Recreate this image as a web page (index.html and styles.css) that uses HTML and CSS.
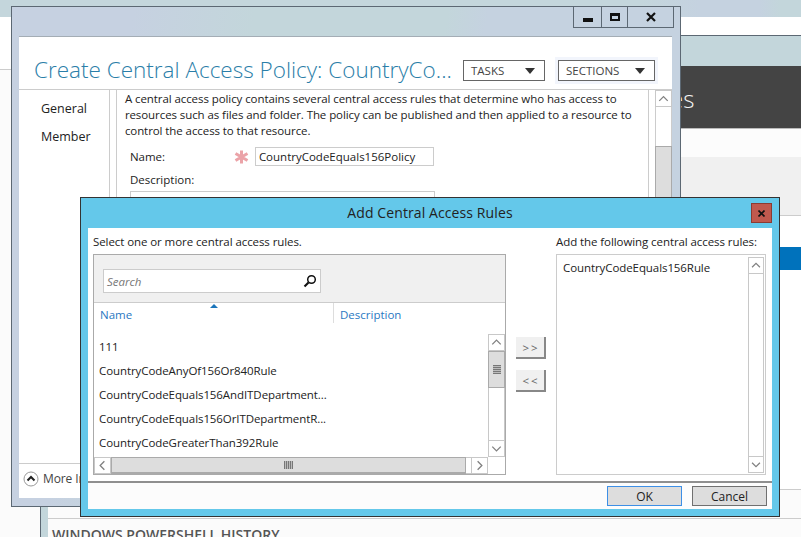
FILE: index.html
```html
<!DOCTYPE html>
<html>
<head>
<title>Create Central Access Policy</title>
<link rel="stylesheet" href="styles.css">
</head>
<body>
<svg class="defs" width="0" height="0">
  <symbol id="chev-up" viewBox="0 0 16 16"><path d="M3.5 10 8 5.5 12.500 10" fill="none" stroke="#808080" stroke-width="1.400"/></symbol>
  <symbol id="chev-down" viewBox="0 0 16 16"><path d="M3.500 6 8 10.500 12.500 6" fill="none" stroke="#808080" stroke-width="1.400"/></symbol>
  <symbol id="chev-left" viewBox="0 0 16 16"><path d="M10 3.500 5.500 8 10 12.500" fill="none" stroke="#808080" stroke-width="1.400"/></symbol>
  <symbol id="chev-right" viewBox="0 0 16 16"><path d="M6 3.500 10.500 8 6 12.500" fill="none" stroke="#808080" stroke-width="1.400"/></symbol>
</svg>

<div class="desktop">
  <div class="top-strip"></div>
  <div class="page-white"></div>

  <!-- window behind the policy dialog -->
  <div class="console">
    <div class="console-frame"></div>
    <div class="console-body">
      <div class="console-head">es</div>
      <div class="row-light"></div>
      <div class="row-grey"></div>
      <div class="row-gap"></div>
      <div class="row-blue"></div>
      <div class="row-tall"></div>
      <div class="row-low"></div>
      <div class="history">WINDOWS POWERSHELL HISTORY</div>
    </div>
  </div>

  <!-- Create Central Access Policy -->
  <div class="win">
    <div class="win-bar">
      <div class="win-btns">
        <div class="win-btn btn-min"><span class="min-icon"></span></div>
        <div class="win-btn btn-max"><span class="max-icon"></span></div>
        <div class="win-btn btn-close">
          <svg width="10" height="10" viewBox="0 0 10 10"><path d="M1 1 9 9M9 1 1 9" stroke="#111" stroke-width="2.200"/></svg>
        </div>
      </div>
    </div>
    <div class="win-inner">
      <div class="win-head">
        <h1 class="win-title">Create Central Access Policy: CountryCo...</h1>
        <div class="drop drop-tasks">TASKS<span class="drop-arrow"></span></div>
        <div class="drop drop-sections">SECTIONS<span class="drop-arrow"></span></div>
      </div>
      <div class="win-main">
        <div class="nav">
          <div class="nav-item">General</div>
          <div class="nav-item">Member</div>
        </div>
        <div class="nav-gap"></div>
        <div class="content">
          <p class="intro">A central access policy contains several central access rules that determine who has access to<br>resources such as files and folder. The policy can be published and then applied to a resource to<br>control the access to that resource.</p>
          <div class="name-row">
            <label class="name-label">Name:</label>
            <svg class="star" width="15" height="14" viewBox="0 0 15 14"><path d="M7.500 0.500V13.500M1.500 3.500 13.500 10.500M13.500 3.500 1.500 10.500" stroke="#eba3a8" stroke-width="3"/></svg>
            <div class="name-input">CountryCodeEquals156Policy</div>
          </div>
          <div class="desc-label">Description:</div>
          <div class="desc-box"></div>
        </div>
        <div class="win-scroll">
          <div class="sb-btn sb-btn-plain"><svg width="16" height="16"><use href="#chev-up"/></svg></div>
          <div class="win-scroll-track"></div>
          <div class="win-scroll-thumb"></div>
        </div>
      </div>
      <div class="win-foot">
        <svg width="16" height="16" viewBox="0 0 16 16"><circle cx="8" cy="8" r="7" fill="#fff" stroke="#9a9a9a"/><path d="M4.500 9.500 8 6l3.500 3.500" fill="none" stroke="#222" stroke-width="2"/></svg>
        <span class="more">More Information</span>
      </div>
    </div>
  </div>

  <!-- Add Central Access Rules -->
  <div class="dialog">
    <div class="dlg-bar">
      <span></span>
      <div class="dlg-title">Add Central Access Rules</div>
      <div class="dlg-close">
        <svg width="7" height="7" viewBox="0 0 7 7"><path d="M.5.500l6 6M6.500.500l-6 6" stroke="#111" stroke-width="1.600"/></svg>
      </div>
    </div>
    <div class="dlg-body">
      <div class="dlg-main">
        <div class="col-left">
          <div class="col-label">Select one or more central access rules.</div>
          <div class="panel">
            <div class="panel-top">
              <div class="search">
                <span class="search-text">Search</span>
                <svg width="14" height="14" viewBox="0 0 14 14"><circle cx="8.500" cy="5.500" r="3.800" fill="none" stroke="#111" stroke-width="1.500"/><path d="M5.500 8.500 1.500 12.500" stroke="#111" stroke-width="2.200"/></svg>
              </div>
            </div>
            <div class="cols">
              <div class="col-name">Name<span class="sort-arrow"></span></div>
              <div class="col-desc">Description</div>
            </div>
            <div class="list-wrap">
              <div class="list">
                <div class="list-row">111</div>
                <div class="list-row">CountryCodeAnyOf156Or840Rule</div>
                <div class="list-row">CountryCodeEquals156AndITDepartment...</div>
                <div class="list-row">CountryCodeEquals156OrITDepartmentR...</div>
                <div class="list-row">CountryCodeGreaterThan392Rule</div>
              </div>
              <div class="vscroll">
                <div class="sb-btn"><svg width="15" height="15"><use href="#chev-up"/></svg></div>
                <div class="vthumb"><span class="grip-h"></span></div>
                <div class="sb-track"></div>
                <div class="sb-btn"><svg width="15" height="15"><use href="#chev-down"/></svg></div>
              </div>
            </div>
            <div class="hscroll">
              <div class="sb-btn sb-btn-h"><svg width="15" height="15"><use href="#chev-left"/></svg></div>
              <div class="hthumb"><span class="grip-v"></span></div>
              <div class="hgap"></div>
              <div class="sb-btn sb-btn-h"><svg width="15" height="15"><use href="#chev-right"/></svg></div>
              <div class="hcorner"></div>
            </div>
          </div>
        </div>
        <div class="col-mid">
          <div class="move-btn">&gt; &gt;</div>
          <div class="move-btn">&lt; &lt;</div>
        </div>
        <div class="col-right">
          <div class="col-label">Add the following central access rules:</div>
          <div class="picked">
            <div class="picked-item">CountryCodeEquals156Rule</div>
            <div class="vscroll vscroll-picked">
              <div class="sb-btn"><svg width="14" height="15"><use href="#chev-up"/></svg></div>
              <div class="sb-track"></div>
              <div class="sb-btn"><svg width="14" height="15"><use href="#chev-down"/></svg></div>
            </div>
          </div>
        </div>
      </div>
      <div class="dlg-foot">
        <div class="foot-btn foot-ok">OK</div>
        <div class="foot-btn">Cancel</div>
      </div>
    </div>
  </div>
</div>
</body>
</html>
```

FILE: styles.css
```css
* {
  box-sizing: border-box;
}

body {
  margin: 0;
  font-family: "Open Sans", "Noto Sans", sans-serif;
  font-size: 11.5px;
  color: #222;
}

.defs {
  display: block;
  height: 0;
}

.desktop {
  position: relative;
  width: 801px;
  height: 537px;
  overflow: hidden;
  background: #fbfbfb;
}

.top-strip {
  height: 17px;
  background: linear-gradient(90deg, #c4d6dc 0, #c4d6dc 640px, #c5d2e0 700px, #c5d2e0 760px, #c3d6db 780px);
}

.page-white {
  height: 53px;
  background: #fff;
  border-bottom: 1px solid #ccc;
}

/* back window */
.console {
  position: absolute;
  left: 40px;
  top: 35px;
  width: 780px;
  height: 520px;
  border: 1px solid #5c6873;
  background: #c3d6db;
  padding-left: 7px;
}

.console-frame {
  height: 30px;
}

.console-body {
  height: 480px;
  background: #fff;
}

.console-head {
  height: 63px;
  background: #444;
  border-bottom: 1px solid #bbb;
  color: #f4f4f4;
  font-size: 24px;
  font-weight: 300;
  line-height: 66px;
  padding-left: 622px;
}

.row-light {
  height: 28px;
  background: #fcfcfc;
}

.row-grey {
  height: 59px;
  background: #f0f0f0;
  border-bottom: 1px solid #ccc;
}

.row-gap {
  height: 31px;
}

.row-blue {
  height: 23px;
  background: #0072bc;
}

.row-tall {
  height: 220px;
  background: #fff;
  border-bottom: 1px solid #ccc;
}

.row-low {
  height: 29px;
  background: #fbfbfb;
  border-bottom: 1px solid #ccc;
}

.history {
  padding: 6px 0 0 4px;
  font-size: 14px;
  font-weight: 600;
  color: #555;
  background: #fbfbfb;
  white-space: nowrap;
}

/* policy window */
.win {
  position: absolute;
  left: 11px;
  top: 6px;
  width: 670px;
  height: 501px;
  border: 1px solid #5c6873;
  padding: 0 8px 8px 7px;
  background: linear-gradient(100deg, #c6d1e1 0, #c6d1e1 120px, #c3d6db 240px, #c3d6db 430px, #c5d2e0 470px, #c5d2e0 100%);
}

.win-bar {
  height: 29px;
  margin-top: -1px;
  margin-bottom: 1px;
  display: flex;
  justify-content: flex-end;
}

.win-btns {
  display: flex;
  height: 22px;
  border: 1px solid #5c6873;
  margin-right: -2px;
}

.win-btn {
  display: flex;
  align-items: center;
  justify-content: center;
  height: 100%;
  border-left: 1px solid #5c6873;
}

.btn-min {
  width: 27px;
  border-left: 0;
}

.btn-max {
  width: 26px;
}

.btn-close {
  width: 46px;
}

.min-icon {
  display: block;
  width: 10px;
  height: 4px;
  margin-top: 6px;
  background: #111;
}

.max-icon {
  display: block;
  width: 10px;
  height: 8px;
  border: 2px solid #111;
  border-top-width: 3px;
}

.win-inner {
  height: 462px;
  background: #fff;
  border-top: 1px solid #a4adb5;
  display: flex;
  flex-direction: column;
}

.win-head {
  height: 53px;
  flex: none;
  display: flex;
  align-items: flex-start;
  border-bottom: 1px solid #ccc;
  padding-left: 15px;
}

.win-title {
  margin: 17px 0 0;
  width: 429px;
  font-size: 22.500px;
  font-weight: 300;
  line-height: 32px;
  color: #2a7ea8;
  white-space: nowrap;
}

.drop {
  display: flex;
  align-items: center;
  justify-content: space-between;
  height: 21px;
  margin-top: 23px;
  padding: 0 9px 0 7px;
  border: 1px solid #666;
  font-size: 11.5px;
  color: #444;
}

.drop-tasks {
  width: 82px;
  margin-right: 13px;
}

.drop-sections {
  width: 97px;
  box-shadow: 0 0 0 3px #f2f5fc;
}

.drop-arrow {
  width: 0;
  height: 0;
  border-left: 5px solid transparent;
  border-right: 5px solid transparent;
  border-top: 6px solid #333;
}

.win-main {
  flex: 1;
  min-height: 0;
  display: flex;
  overflow: hidden;
}

.nav {
  width: 91px;
  padding: 5px 0 0 22px;
  border-right: 1px solid #ccc;
}

.nav-item {
  height: 28px;
  line-height: 28px;
  font-size: 12.5px;
}

.nav-gap {
  width: 7px;
  border-right: 1px solid #ccc;
}

.content {
  width: 533px;
  padding: 1px 0 0 8px;
  border-right: 1px solid #ccc;
}

.intro {
  margin: 0 0 8px;
  line-height: 16px;
  letter-spacing: -0.08px;
  white-space: nowrap;
}

.name-row {
  display: flex;
  align-items: center;
  padding-left: 5px;
  height: 19px;
}

.name-label {
  width: 104px;
}

.star {
  margin-right: 6px;
}

.name-input {
  width: 179px;
  height: 19px;
  line-height: 17px;
  padding-left: 3px;
  border: 1px solid #ccc;
}

.desc-label {
  margin: 6px 0 3px 5px;
  line-height: 16px;
}

.desc-box {
  width: 305px;
  height: 100px;
  margin-left: 5px;
  border: 1px solid #ccc;
}

.win-scroll {
  width: 17px;
  margin-left: 6px;
  display: flex;
  flex-direction: column;
}

.win-scroll-track {
  height: 39px;
  border-left: 1px solid #ccc;
  border-right: 1px solid #ccc;
}

.win-scroll-thumb {
  height: 200px;
  background: #ddd;
  border: 1px solid #aaa;
}

.sb-btn {
  flex: none;
  height: 17px;
  display: flex;
  align-items: center;
  justify-content: center;
  background: #fff;
  border: 1px solid #c8c8c8;
}

.sb-btn-plain {
  height: 17px;
}

.win-foot {
  height: 35px;
  flex: none;
  display: flex;
  align-items: center;
  gap: 4px;
  padding: 0 0 5px 4px;
  border-top: 1px solid #ccc;
  font-size: 12px;
  letter-spacing: -0.1px;
  color: #444;
}

.more {
  white-space: nowrap;
}

/* rules dialog */
.dialog {
  position: absolute;
  left: 80px;
  top: 197px;
  width: 700px;
  height: 320px;
  border: 1px solid #333;
  background: #64c8ea;
  padding: 0 7px 7px;
  display: flex;
  flex-direction: column;
}

.dlg-bar {
  height: 30px;
  flex: none;
  display: grid;
  grid-template-columns: 1fr auto 1fr;
  align-items: start;
}

.dlg-title {
  font-size: 14px;
  line-height: 30px;
  letter-spacing: 0.1px;
  color: #222;
}

.dlg-close {
  justify-self: end;
  display: flex;
  align-items: center;
  justify-content: center;
  width: 21px;
  height: 20px;
  margin-top: 5px;
  background: #c0594e;
  border: 1px solid #8b3b33;
}

.dlg-body {
  flex: 1;
  min-height: 0;
  background: #fff;
  display: flex;
  flex-direction: column;
}

.dlg-main {
  height: 255px;
  flex: none;
  display: flex;
  gap: 10px;
  padding-left: 5px;
  border-bottom: 2px solid #8f8f8f;
}

.col-left {
  width: 413px;
}

.col-label {
  height: 26px;
  padding-top: 6px;
  line-height: 16px;
  letter-spacing: -0.08px;
  white-space: nowrap;
}

.panel {
  height: 221px;
  border: 1px solid #aaa;
  display: flex;
  flex-direction: column;
}

.panel-top {
  height: 48px;
  flex: none;
  padding: 14px 0 0 9px;
  background: #f0f0f0;
  border-bottom: 1px solid #ccc;
}

.search {
  width: 218px;
  height: 24px;
  display: flex;
  align-items: center;
  justify-content: space-between;
  padding: 0 3px 0 3px;
  background: #fff;
  border: 1px solid #ccc;
}

.search-text {
  font-style: italic;
  color: #777;
}

.cols {
  height: 20px;
  flex: none;
  display: flex;
  color: #2a78c2;
  line-height: 24px;
}

.col-name {
  position: relative;
  width: 240px;
  padding-left: 6px;
  border-right: 1px solid #ddd;
}

.sort-arrow {
  position: absolute;
  left: 116px;
  top: 1px;
  width: 0;
  height: 0;
  border-left: 4px solid transparent;
  border-right: 4px solid transparent;
  border-bottom: 4px solid #1b75bb;
}

.col-desc {
  padding-left: 6px;
}

.list-wrap {
  flex: 1;
  min-height: 0;
  display: flex;
  padding-top: 11px;
}

.list {
  flex: 1;
  padding: 1px 0 0 5px;
  letter-spacing: -0.08px;
}

.list-row {
  height: 24px;
  line-height: 24px;
  white-space: nowrap;
}

.vscroll {
  width: 17px;
  flex: none;
  display: flex;
  flex-direction: column;
}

.vthumb {
  height: 37px;
  flex: none;
  display: flex;
  align-items: center;
  justify-content: center;
  background: #ddd;
  border: 1px solid #aaa;
}

.grip-h {
  width: 8px;
  height: 9px;
  background: repeating-linear-gradient(180deg, #777 0, #777 1px, #bbb 1px, #bbb 2px);
}

.sb-track {
  flex: 1;
  border-left: 1px solid #c8c8c8;
  border-right: 1px solid #c8c8c8;
}

.hscroll {
  height: 17px;
  flex: none;
  display: flex;
}

.sb-btn-h {
  width: 17px;
}

.hthumb {
  width: 355px;
  display: flex;
  align-items: center;
  justify-content: center;
  background: #ddd;
  border: 1px solid #aaa;
  border-width: 1px 1px 2px;
}

.grip-v {
  width: 9px;
  height: 8px;
  background: repeating-linear-gradient(90deg, #777 0, #777 1px, #bbb 1px, #bbb 2px);
}

.hgap {
  width: 5px;
  border-top: 1px solid #c8c8c8;
  border-bottom: 1px solid #c8c8c8;
}

.hcorner {
  flex: 1;
}

.col-mid {
  width: 30px;
  padding-top: 109px;
  display: flex;
  flex-direction: column;
  gap: 11px;
}

.move-btn {
  height: 22px;
  text-align: center;
  line-height: 22px;
  word-spacing: -1px;
  color: #666;
  background: #f0f0f0;
  border-right: 2px solid #888;
  border-bottom: 2px solid #888;
}

.col-right {
  width: 210px;
}

.picked {
  height: 221px;
  display: flex;
  justify-content: space-between;
  border: 1px solid #ccc;
  padding: 2px 1px 1px 6px;
  letter-spacing: -0.08px;
}

.picked-item {
  line-height: 22px;
}

.vscroll-picked {
  width: 16px;
}

.dlg-foot {
  flex: 1;
  display: flex;
  justify-content: flex-end;
  gap: 10px;
  padding: 3px 5px 0 0;
  background: #fcfcfc;
}

.foot-btn {
  width: 75px;
  height: 20px;
  text-align: center;
  line-height: 19px;
  font-size: 12px;
  background: #ddd;
  border: 1px solid #707070;
}

.foot-ok {
  border-color: #3d8fe6;
}
```
